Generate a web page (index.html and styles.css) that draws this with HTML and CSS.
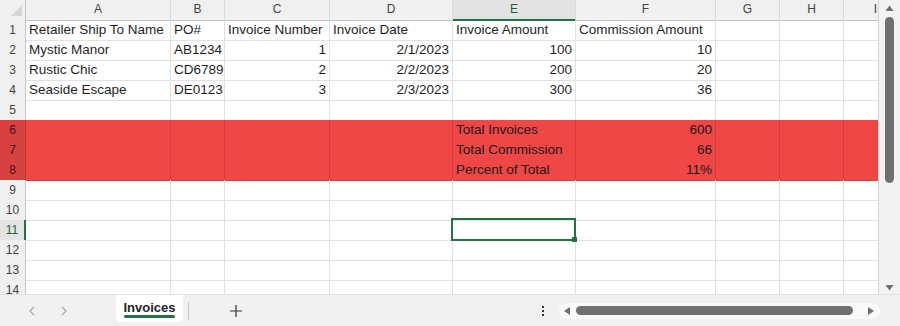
FILE: index.html
```html
<!DOCTYPE html>
<html lang="en">
<head>
    <meta charset="UTF-8">
    <title>Invoices</title>
    <link rel="stylesheet" href="styles.css">
</head>
<body>
    <div class="app">
        <div class="workarea">
            <!-- Sheet grid -->
            <div class="sheet">
                <div class="row colhead">
                    <div class="corner">
                        <svg width="26" height="20" viewBox="0 0 26 20"><polygon points="11,16 22,16 22,5" fill="#d6d6d6"/></svg>
                    </div>
                    <div>A</div><div>B</div><div>C</div><div>D</div><div class="act">E</div><div>F</div><div>G</div><div>H</div><div>I</div>
                </div>
                <div class="row">
                    <div class="rh">1</div>
                    <div>Retailer Ship To Name</div><div>PO#</div><div>Invoice Number</div><div>Invoice Date</div><div>Invoice Amount</div><div>Commission Amount</div><div></div><div></div><div></div>
                </div>
                <div class="row">
                    <div class="rh">2</div>
                    <div>Mystic Manor</div><div>AB1234</div><div class="num">1</div><div class="num">2/1/2023</div><div class="num">100</div><div class="num">10</div><div></div><div></div><div></div>
                </div>
                <div class="row">
                    <div class="rh">3</div>
                    <div>Rustic Chic</div><div>CD6789</div><div class="num">2</div><div class="num">2/2/2023</div><div class="num">200</div><div class="num">20</div><div></div><div></div><div></div>
                </div>
                <div class="row">
                    <div class="rh">4</div>
                    <div>Seaside Escape</div><div>DE0123</div><div class="num">3</div><div class="num">2/3/2023</div><div class="num">300</div><div class="num">36</div><div></div><div></div><div></div>
                </div>
                <div class="row before-hl">
                    <div class="rh">5</div>
                    <div></div><div></div><div></div><div></div><div></div><div></div><div></div><div></div><div></div>
                </div>
                <!-- Totals block, filled red -->
                <div class="row hl">
                    <div class="rh">6</div>
                    <div></div><div></div><div></div><div></div><div>Total Invoices</div><div class="num">600</div><div></div><div></div><div></div>
                </div>
                <div class="row hl">
                    <div class="rh">7</div>
                    <div></div><div></div><div></div><div></div><div>Total Commission</div><div class="num">66</div><div></div><div></div><div></div>
                </div>
                <div class="row hl">
                    <div class="rh">8</div>
                    <div></div><div></div><div></div><div></div><div>Percent of Total</div><div class="num">11%</div><div></div><div></div><div></div>
                </div>
                <div class="row">
                    <div class="rh">9</div>
                    <div></div><div></div><div></div><div></div><div></div><div></div><div></div><div></div><div></div>
                </div>
                <div class="row">
                    <div class="rh">10</div>
                    <div></div><div></div><div></div><div></div><div></div><div></div><div></div><div></div><div></div>
                </div>
                <div class="row">
                    <div class="rh act">11</div>
                    <div></div><div></div><div></div><div></div><div class="sel"></div><div></div><div></div><div></div><div></div>
                </div>
                <div class="row">
                    <div class="rh">12</div>
                    <div></div><div></div><div></div><div></div><div></div><div></div><div></div><div></div><div></div>
                </div>
                <div class="row">
                    <div class="rh">13</div>
                    <div></div><div></div><div></div><div></div><div></div><div></div><div></div><div></div><div></div>
                </div>
                <div class="row">
                    <div class="rh">14</div>
                    <div></div><div></div><div></div><div></div><div></div><div></div><div></div><div></div><div></div>
                </div>
            </div>

            <!-- Vertical scrollbar -->
            <div class="vscroll">
                <svg width="9" height="6" viewBox="0 0 9 6"><path d="M4.5 0.5 L8.5 6 H0.5 Z" fill="#707070"/></svg>
                <div class="vthumb"></div>
                <svg class="down" width="9" height="6" viewBox="0 0 9 6"><path d="M0.5 0 H8.5 L4.5 5.5 Z" fill="#707070"/></svg>
            </div>
        </div>

        <!-- Sheet tabs -->
        <div class="tabbar">
            <div class="nav">
                <svg width="8" height="10" viewBox="0 0 8 10"><path d="M6 1 L2 5 L6 9" fill="none" stroke="#a8a8a8" stroke-width="1.2"/></svg>
                <svg width="8" height="10" viewBox="0 0 8 10"><path d="M2 1 L6 5 L2 9" fill="none" stroke="#a8a8a8" stroke-width="1.2"/></svg>
            </div>
            <div class="tab">Invoices</div>
            <div class="sep"></div>
            <div class="add">
                <svg width="12" height="12" viewBox="0 0 12 12"><path d="M6 0 V12 M0 6 H12" stroke="#333" stroke-width="1.2"/></svg>
            </div>
            <div class="dots">
                <svg width="4" height="10" viewBox="0 0 4 10"><rect x="1" y="0" width="2" height="2" fill="#333"/><rect x="1" y="4" width="2" height="2" fill="#333"/><rect x="1" y="8" width="2" height="2" fill="#333"/></svg>
            </div>
            <div class="hscroll">
                <svg width="6" height="8" viewBox="0 0 6 8"><path d="M0 4 L6 0 V8 Z" fill="#707070"/></svg>
                <div class="hthumb"></div>
                <svg width="6" height="8" viewBox="0 0 6 8"><path d="M6 4 L0 0 V8 Z" fill="#707070"/></svg>
            </div>
        </div>
    </div>
</body>
</html>
```

FILE: styles.css
```css
body {
    margin: 0;
    font-family: "Liberation Sans", Arial, sans-serif;
    color: #1f1f1f;
    background: #fff;
}

.app {
    width: 900px;
    height: 326px;
    display: flex;
    flex-direction: column;
    overflow: hidden;
}

.workarea {
    display: flex;
    height: 294px;
}

/* Grid */
.sheet {
    width: 878px;
    overflow: hidden;
}

.row {
    display: grid;
    grid-template-columns: 26px 145px 54px 105px 123px 123px 140px 64px 64px 64px;
    height: 20px;
}

.row > div {
    box-sizing: border-box;
    border-right: 1px solid #e1e1e1;
    border-bottom: 1px solid #e1e1e1;
    padding: 0 3px;
    font-size: 13.5px;
    line-height: 19px;
    white-space: nowrap;
}

.row > .num {
    text-align: right;
}

/* Column and row headers */
.colhead > div {
    background: #f0f0f0;
    color: #444;
    font-size: 12px;
    text-align: center;
    border-right-color: #d9d9d9;
    border-bottom-color: #c4c4c4;
}

.colhead > .corner {
    padding: 0;
    line-height: 0;
    border-right-color: #c4c4c4;
}

.colhead > .act {
    background: #e3e3e3;
    color: #1d5f38;
    border-bottom: 2px solid #217346;
}

.row > .rh {
    background: #f0f0f0;
    color: #444;
    font-size: 12px;
    text-align: center;
    padding: 1px 0 0;
    border-right-color: #c4c4c4;
    border-bottom-color: #d9d9d9;
}

.row > .rh.act {
    background: #e3e3e3;
    color: #1d5f38;
    border-right: 2px solid #217346;
}

/* Red totals band */
.before-hl > div {
    border-bottom-color: #d23c3c;
}

.hl > div {
    background: #ef4646;
    border-color: #d23c3c;
    color: #1a1a1a;
}

.hl > .rh {
    background: #d94141;
    color: #3a1515;
    border-right-color: #c23434;
    border-bottom-color: #c23434;
}

/* Active cell */
.row > .sel {
    position: relative;
}

.sel::after {
    content: "";
    position: absolute;
    left: -2px;
    top: -2px;
    right: -1px;
    bottom: -1px;
    border: 2px solid #217346;
}

.sel::before {
    content: "";
    position: absolute;
    right: -2px;
    bottom: -2px;
    width: 5px;
    height: 5px;
    background: #217346;
    z-index: 1;
}

/* Vertical scrollbar */
.vscroll {
    width: 22px;
    box-sizing: border-box;
    border-left: 1px solid #d4d4d4;
    background: #f3f3f3;
    display: flex;
    flex-direction: column;
    align-items: center;
    padding: 5px 0 3px;
}

.vthumb {
    width: 9px;
    height: 166px;
    margin-top: 6px;
    border-radius: 5px;
    background: #707070;
}

.vscroll .down {
    margin-top: auto;
}

/* Tab bar */
.tabbar {
    height: 32px;
    box-sizing: border-box;
    border-top: 1px solid #e2e2e2;
    background: #f0f0f0;
    display: flex;
    align-items: center;
}

.nav {
    width: 116px;
    box-sizing: border-box;
    padding-left: 28px;
    display: flex;
    gap: 24px;
}

.tab {
    align-self: flex-start;
    width: 67px;
    height: 27px;
    box-sizing: border-box;
    background: #fff;
    border-radius: 0 0 5px 5px;
    font-size: 13px;
    font-weight: bold;
    color: #242424;
    text-align: center;
    padding-top: 5px;
    position: relative;
}

.tab::after {
    content: "";
    position: absolute;
    left: 8px;
    right: 8px;
    bottom: 4px;
    height: 3px;
    border-radius: 2px;
    background: #217346;
}

.sep {
    width: 1px;
    height: 18px;
    margin-left: 5px;
    background: #c8c8c8;
}

.add {
    margin-left: 41px;
    line-height: 0;
}

.dots {
    margin-left: auto;
    margin-right: 14px;
    line-height: 0;
}

.hscroll {
    width: 321px;
    height: 16px;
    margin-right: 20px;
    box-sizing: border-box;
    padding-left: 5px;
    border-radius: 8px;
    background: #f9f9f9;
    display: flex;
    align-items: center;
}

.hthumb {
    width: 277px;
    height: 9px;
    margin: 0 15px 0 6px;
    border-radius: 5px;
    background: #707070;
}
```
